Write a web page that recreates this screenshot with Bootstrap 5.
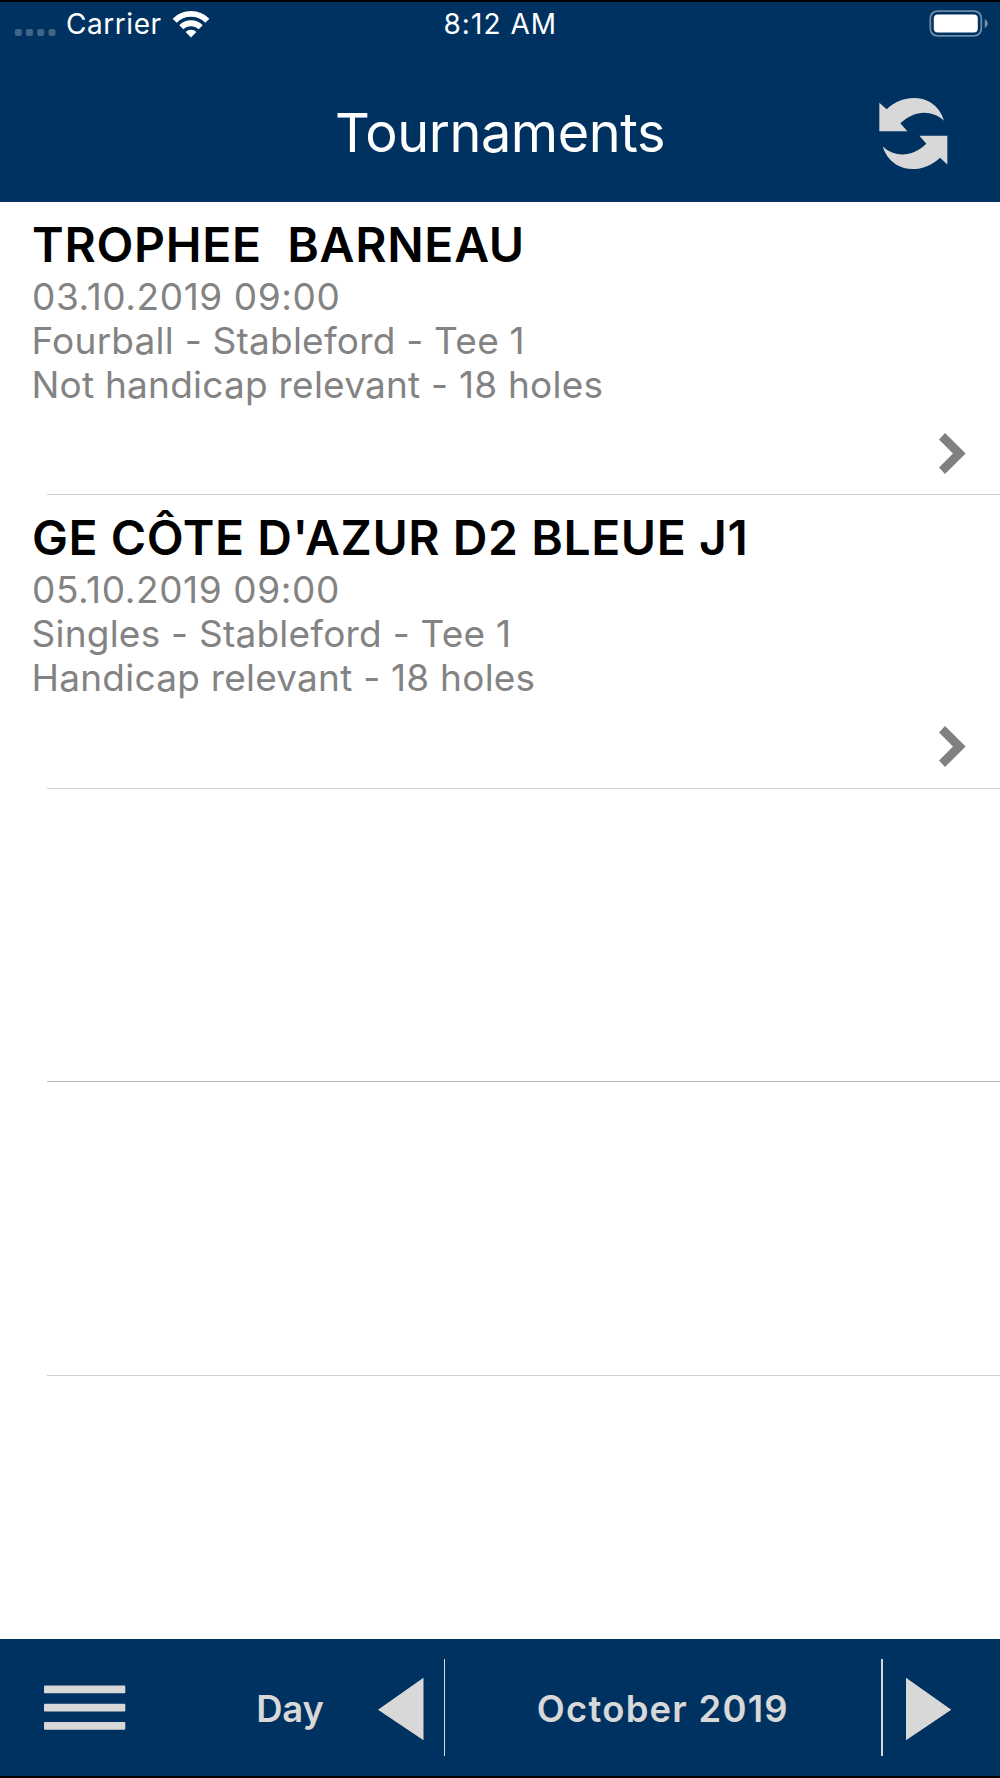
<!doctype html>
<html lang="en">
<head>
<meta charset="utf-8">
<meta name="viewport" content="width=device-width, initial-scale=1">
<title>Tournaments</title>
<link href="https://cdn.jsdelivr.net/npm/bootstrap@5.3.0/dist/css/bootstrap.min.css" rel="stylesheet">
<style>
  :root { --navy: #003261; --silver: #d8d8d8; }
  body { font-family: "Inter", "Liberation Sans", sans-serif; background: #fff; }
  svg { display: block; flex: none; }
  .phone { height: 1778px; }
  .app-head { height: 201.6px; background: var(--navy); border-top: 2px solid #000; color: #fff; }
  .status { height: 44px; padding: 8px 0 0 14px; font-size: 28px; line-height: 28px; display: grid; grid-template-columns: 430.5px 1fr auto; }
  .carrier { letter-spacing: .55px; margin-left: 10px; }
  .clock { letter-spacing: 1.05px; margin-left: -1px; }
  .wifi { margin: -1px 0 0 10.4px; }
  .battery { margin: -1px 9.5px 0 0; }
  .title-bar { display: grid; grid-template-columns: 1fr auto 1fr; padding: 50px 52px 0 52px; }
  .title-bar h1 { grid-column: 2; font-size: 54px; line-height: 60px; font-weight: 400; letter-spacing: -.42px; margin: 7px 0 0; }
  .title-bar svg { justify-self: end; margin-right: -1px; }
  .entry { height: 293.67px; padding: 15.2px 0 0 32px; background: linear-gradient(#d0d0d0, #d0d0d0) 47px 100% / 100% 1.4px no-repeat; }
  .entry.dark-line { background-image: linear-gradient(#bcbcbc, #bcbcbc); }
  .entry h2 { font-size: 48px; line-height: 56px; font-weight: 600; letter-spacing: .7px; margin: 0 0 2px; white-space: pre; color: #000; }
  .entry h2.tight { letter-spacing: .58px; }
  .entry p { font-size: 37px; line-height: 43.9px; margin: 0 0 0 -.5px; color: #838383; letter-spacing: .23px; }
  .entry p.when { letter-spacing: .6px; margin-left: 0; }
  .entry svg { margin: 13px 34px 0 auto; }
  .app-foot { height: 138.6px; background: var(--navy); border-bottom: 2px solid #000; color: var(--silver); font-size: 36.4px; font-weight: 600; line-height: 44px; padding-left: 43.7px; }
  .rule { width: 1.5px; height: 97px; background: var(--silver); flex: none; margin-top: -.5px; }
  .foot-text { padding-top: 2px; }
  .day { margin-left: 130.5px; width: 121.8px; letter-spacing: -.1px; }
  .month { width: 436.3px; letter-spacing: 1.25px; text-align: center; padding-right: 1px; }
  .arrow { margin-top: 2px; }
</style>
<script src="https://cdn.jsdelivr.net/npm/bootstrap@5.3.0/dist/js/bootstrap.bundle.min.js"></script>
</head>
<body>
<div class="phone d-flex flex-column overflow-hidden">
  <header class="app-head flex-shrink-0">
    <div class="status">
      <div class="d-flex align-items-start">
        <svg width="42" height="28" viewBox="0 0 42 28" fill="#406587"><rect x=".8" y="19" width="7" height="7" rx="2"/><rect x="12" y="19" width="7" height="7" rx="2"/><rect x="23.2" y="19" width="7" height="7" rx="2"/><rect x="34.5" y="19" width="7" height="7" rx="2"/></svg>
        <span class="carrier">Carrier</span>
        <svg class="wifi" width="38" height="29" viewBox="0 0 38 29" fill="none" stroke="#fff" stroke-width="5.8"><path d="M2.7 11.7a23.1 23.1 0 0 1 32.6 0"/><path d="M9.3 18.3a13.7 13.7 0 0 1 19.4 0"/><path d="M19 28.6l-5.4-5.6a7.8 7.8 0 0 1 10.8 0z" fill="#fff" stroke="none"/></svg>
      </div>
      <div class="clock">8:12 AM</div>
      <svg class="battery" width="62" height="29" viewBox="0 0 62 29"><rect x="1.3" y="2.2" width="51" height="24.6" rx="7" fill="none" stroke="#6d8aa6" stroke-width="1.8"/><rect x="4.8" y="5.4" width="44" height="18.2" rx="4" fill="#fff"/><path d="M55.8 10q3 1.6 3 4.6t-3 4.6z" fill="#7892ab"/></svg>
    </div>
    <div class="title-bar">
      <h1>Tournaments</h1>
      <svg width="70" height="74" viewBox="57 288 210 222" fill="#d8d8d8"><path id="turn" d="M58 308L80 328C120 289 176 286 211 307Q241 326 252 362C215 328 162 330 121 370L142 394H58Z"/><use href="#turn" transform="rotate(180 160 400.7)"/></svg>
    </div>
  </header>
  <main class="flex-grow-1 overflow-hidden">
    <article class="entry">
      <h2>TROPHEE  BARNEAU</h2>
      <p class="when">03.10.2019 09:00</p>
      <p>Fourball - Stableford - Tee 1</p>
      <p>Not handicap relevant - 18 holes</p>
      <svg width="28" height="57" viewBox="0 0 28 57"><path d="M1 19.500l6-6.500 20.600 20.500L7 54l-6-6.500L15 33.500z" fill="#808080"/></svg>
    </article>
    <article class="entry">
      <h2 class="tight">GE CÔTE D'AZUR D2 BLEUE J1</h2>
      <p class="when">05.10.2019 09:00</p>
      <p>Singles - Stableford - Tee 1</p>
      <p>Handicap relevant - 18 holes</p>
      <svg width="28" height="57" viewBox="0 0 28 57"><path d="M1 19.500l6-6.500 20.600 20.500L7 54l-6-6.500L15 33.500z" fill="#808080"/></svg>
    </article>
    <div class="entry dark-line"></div>
    <div class="entry"></div>
  </main>
  <footer class="app-foot d-flex align-items-center flex-shrink-0">
    <svg width="82" height="46" viewBox="0 0 82 46" fill="#d8d8d8"><rect y=".5" width="81.3" height="7.8" rx="1"/><rect y="18.7" width="81.3" height="7.8" rx="1"/><rect y="36.9" width="81.3" height="7.8" rx="1"/></svg>
    <span class="foot-text day">Day</span>
    <svg class="arrow" width="65.7" height="64" viewBox="0 0 65.7 64"><path d="M0 32.800L45.500 .7v62.600z" fill="#d8d8d8"/></svg>
    <span class="rule"></span>
    <span class="foot-text month">October 2019</span>
    <span class="rule"></span>
    <svg class="arrow" width="70" height="64" viewBox="0 0 70 64"><path d="M68.300 32.800L23 .7v62.600z" fill="#d8d8d8"/></svg>
  </footer>
</div>
</body>
</html>
